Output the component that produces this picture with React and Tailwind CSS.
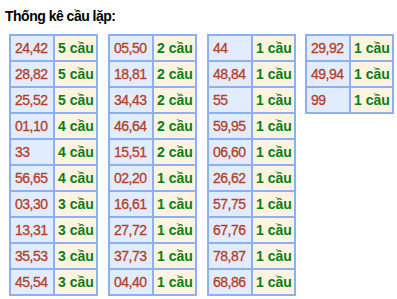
import React from "react";

const tables = [
  [
    ["24,42", "5 cầu"],
    ["28,82", "5 cầu"],
    ["25,52", "5 cầu"],
    ["01,10", "4 cầu"],
    ["33", "4 cầu"],
    ["56,65", "4 cầu"],
    ["03,30", "3 cầu"],
    ["13,31", "3 cầu"],
    ["35,53", "3 cầu"],
    ["45,54", "3 cầu"],
  ],
  [
    ["05,50", "2 cầu"],
    ["18,81", "2 cầu"],
    ["34,43", "2 cầu"],
    ["46,64", "2 cầu"],
    ["15,51", "2 cầu"],
    ["02,20", "1 cầu"],
    ["16,61", "1 cầu"],
    ["27,72", "1 cầu"],
    ["37,73", "1 cầu"],
    ["04,40", "1 cầu"],
  ],
  [
    ["44", "1 cầu"],
    ["48,84", "1 cầu"],
    ["55", "1 cầu"],
    ["59,95", "1 cầu"],
    ["06,60", "1 cầu"],
    ["26,62", "1 cầu"],
    ["57,75", "1 cầu"],
    ["67,76", "1 cầu"],
    ["78,87", "1 cầu"],
    ["68,86", "1 cầu"],
  ],
  [
    ["29,92", "1 cầu"],
    ["49,94", "1 cầu"],
    ["99", "1 cầu"],
  ],
];

const margins = ["ml-[9px]", "ml-[10px]", "ml-[10px]", "ml-[9px]"];

const LoTable = ({ rows, className }) => (
  <div
    className={`w-[89px] border-l-2 border-t-2 border-[#8db0f4] grid grid-cols-[44px_43px] ${className}`}
  >
    {rows.map(([num, count]) => (
      <React.Fragment key={num}>
        <div className="h-[26px] border-r-2 border-b-2 border-[#8db0f4] bg-[#e1edff] pl-[4px] flex items-center text-[14px] tracking-[-0.5px] text-[#b53f29] [-webkit-text-stroke:0.3px_#b53f29] whitespace-nowrap">
          {num}
        </div>
        <div className="h-[26px] border-r-2 border-b-2 border-[#8db0f4] bg-[#fff4e2] pl-[3px] flex items-center text-[14px] font-bold text-[#0a7d14] whitespace-nowrap">
          {count}
        </div>
      </React.Fragment>
    ))}
  </div>
);

const App = () => {
  return (
    <div className="w-[397px] h-[299px] bg-white font-['Liberation_Sans',Arial,sans-serif]">
      <p className="pl-[5px] pt-[8px] text-[14px] font-bold tracking-[-0.5px] text-black leading-[16px]">
        Thống kê cầu lặp:
      </p>
      <div className="flex items-start mt-[10px]">
        {tables.map((rows, i) => (
          <LoTable key={i} rows={rows} className={margins[i]} />
        ))}
      </div>
    </div>
  );
};

export default App;
